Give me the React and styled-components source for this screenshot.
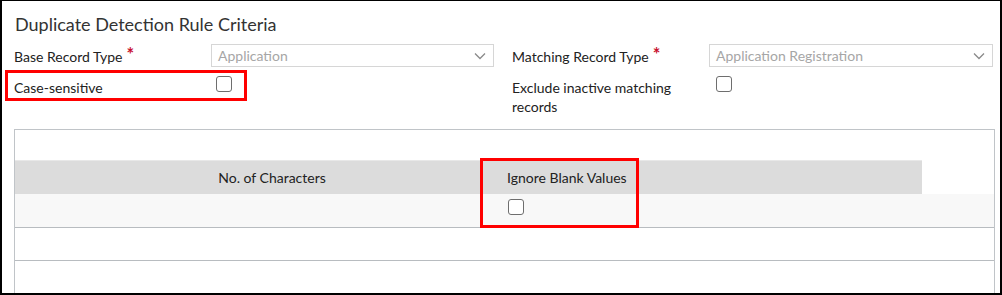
import React from 'react';
import styled, { createGlobalStyle } from 'styled-components';

const Global = createGlobalStyle`
  html, body {
    margin: 0;
    padding: 0;
    background: #fff;
  }
  body {
    font-family: "Segoe UI", Lato, "Open Sans", sans-serif;
  }
`;

const Frame = styled.div`
  box-sizing: border-box;
  width: 1002px;
  height: 295px;
  overflow: hidden;
  border-style: solid;
  border-color: #000;
  border-width: 1px 2px 2px 2px;
  background: #fff;
  padding: 0 5px 0 12px;
`;

const Title = styled.h2`
  margin: 0;
  padding: 12px 0 0 1px;
  height: 33px;
  box-sizing: border-box;
  font-size: 18px;
  line-height: 22px;
  font-weight: 400;
  color: #333;
`;

const FormGrid = styled.div`
  display: grid;
  grid-template-columns: 480px 481px;
  column-gap: 18px;
  row-gap: 3px;
  margin-top: 10px;
`;

const Field = styled.div`
  display: flex;
  align-items: flex-start;
  min-height: ${({tall}) => tall ? '44px' : '23px'};
`;

const Label = styled.div`
  width: ${({w}) => w || 197}px;
  flex: none;
  font-size: 14px;
  line-height: 19px;
  color: #222;
  padding-top: ${({top}) => top || 0}px;
`;

const Required = styled.span`
  color: #c8102e;
  margin-left: 4px;
  font-size: 18px;
  line-height: 10px;
  font-weight: 700;
  position: relative;
  top: -1px;
`;

const Select = styled.div`
  box-sizing: border-box;
  flex: 1;
  height: 23px;
  border: 1px solid #d6d6d6;
  display: flex;
  align-items: center;
  justify-content: space-between;
  padding: 0 7px 0 6px;
  font-size: 14px;
  color: #a6a6a6;
`;

const Box = styled.div`
  box-sizing: border-box;
  width: 16px;
  height: 16px;
  border: 1px solid #6e6e6e;
  border-radius: 3px;
  background: #fff;
  margin: ${({m}) => m || '0'};
`;

const Highlight = styled.div`
  box-sizing: border-box;
  border: 3px solid #ff0000;
  display: flex;
  align-items: flex-start;
  margin-left: -9px;
  width: 242px;
  height: 31px;
  padding: 3px 0 0 6px;
`;

const Table = styled.div`
  box-sizing: border-box;
  margin-top: 13px;
  border: 1px solid #c0c4c8;
  border-bottom: none;
  height: 170px;
  padding-top: 30px;
`;

const HeadRow = styled.div`
  display: grid;
  grid-template-columns: 492px 1fr;
  width: 907px;
  height: 34px;
  background: #dcdcdc;
  border-top: 1px solid #e8e8e8;
  box-sizing: border-box;
`;

const HeadCell = styled.div`
  font-size: 14px;
  line-height: 20px;
  color: #222;
  padding-top: 7px;
  text-align: ${({center}) => center ? 'center' : 'left'};
  padding-left: ${({center}) => center ? '22px' : '0'};
`;

const Row = styled.div`
  height: ${({shade}) => shade ? 34 : 33}px;
  box-sizing: border-box;
  border-bottom: 1px solid #b8bcc0;
  background: ${({shade}) => shade ? '#f8f8f8' : '#fff'};
  display: grid;
  grid-template-columns: 492px 1fr;
`;

const Marked = styled.div`
  position: relative;
`;

const RedFrame = styled.div`
  position: absolute;
  left: 466px;
  top: 29px;
  width: 159px;
  height: 70px;
  box-sizing: border-box;
  border: 3px solid #ff0000;
  pointer-events: none;
`;

const Chevron = () => (
  <svg width="12" height="8" viewBox="0 0 12 8">
    <path d="M1 1.5 L6 6.5 L11 1.5" fill="none" stroke="#8a8a8a" strokeWidth="1.3" />
  </svg>
);

export default function App() {
  return (
    <>
      <Global />
      <Frame>
        <Title>Duplicate Detection Rule Criteria</Title>
        <FormGrid>
          <Field>
            <Label top={3}>Base Record Type<Required>*</Required></Label>
            <Select>Application<Chevron /></Select>
          </Field>
          <Field>
            <Label top={3}>Matching Record Type<Required>*</Required></Label>
            <Select>Application Registration<Chevron /></Select>
          </Field>
          <Field>
            <Highlight>
              <Label top={2} w={202}>Case-sensitive</Label>
              <Box />
            </Highlight>
          </Field>
          <Field tall>
            <Label top={8}>Exclude inactive matching records</Label>
            <Box m="6px 0 0 7px" />
          </Field>
        </FormGrid>
        <Marked>
          <Table>
            <HeadRow>
              <HeadCell center>No. of Characters</HeadCell>
              <HeadCell>Ignore Blank Values</HeadCell>
            </HeadRow>
            <Row shade>
              <div />
              <div><Box m="5px 0 0 1px" /></div>
            </Row>
            <Row />
          </Table>
          <RedFrame />
        </Marked>
      </Frame>
    </>
  );
}
